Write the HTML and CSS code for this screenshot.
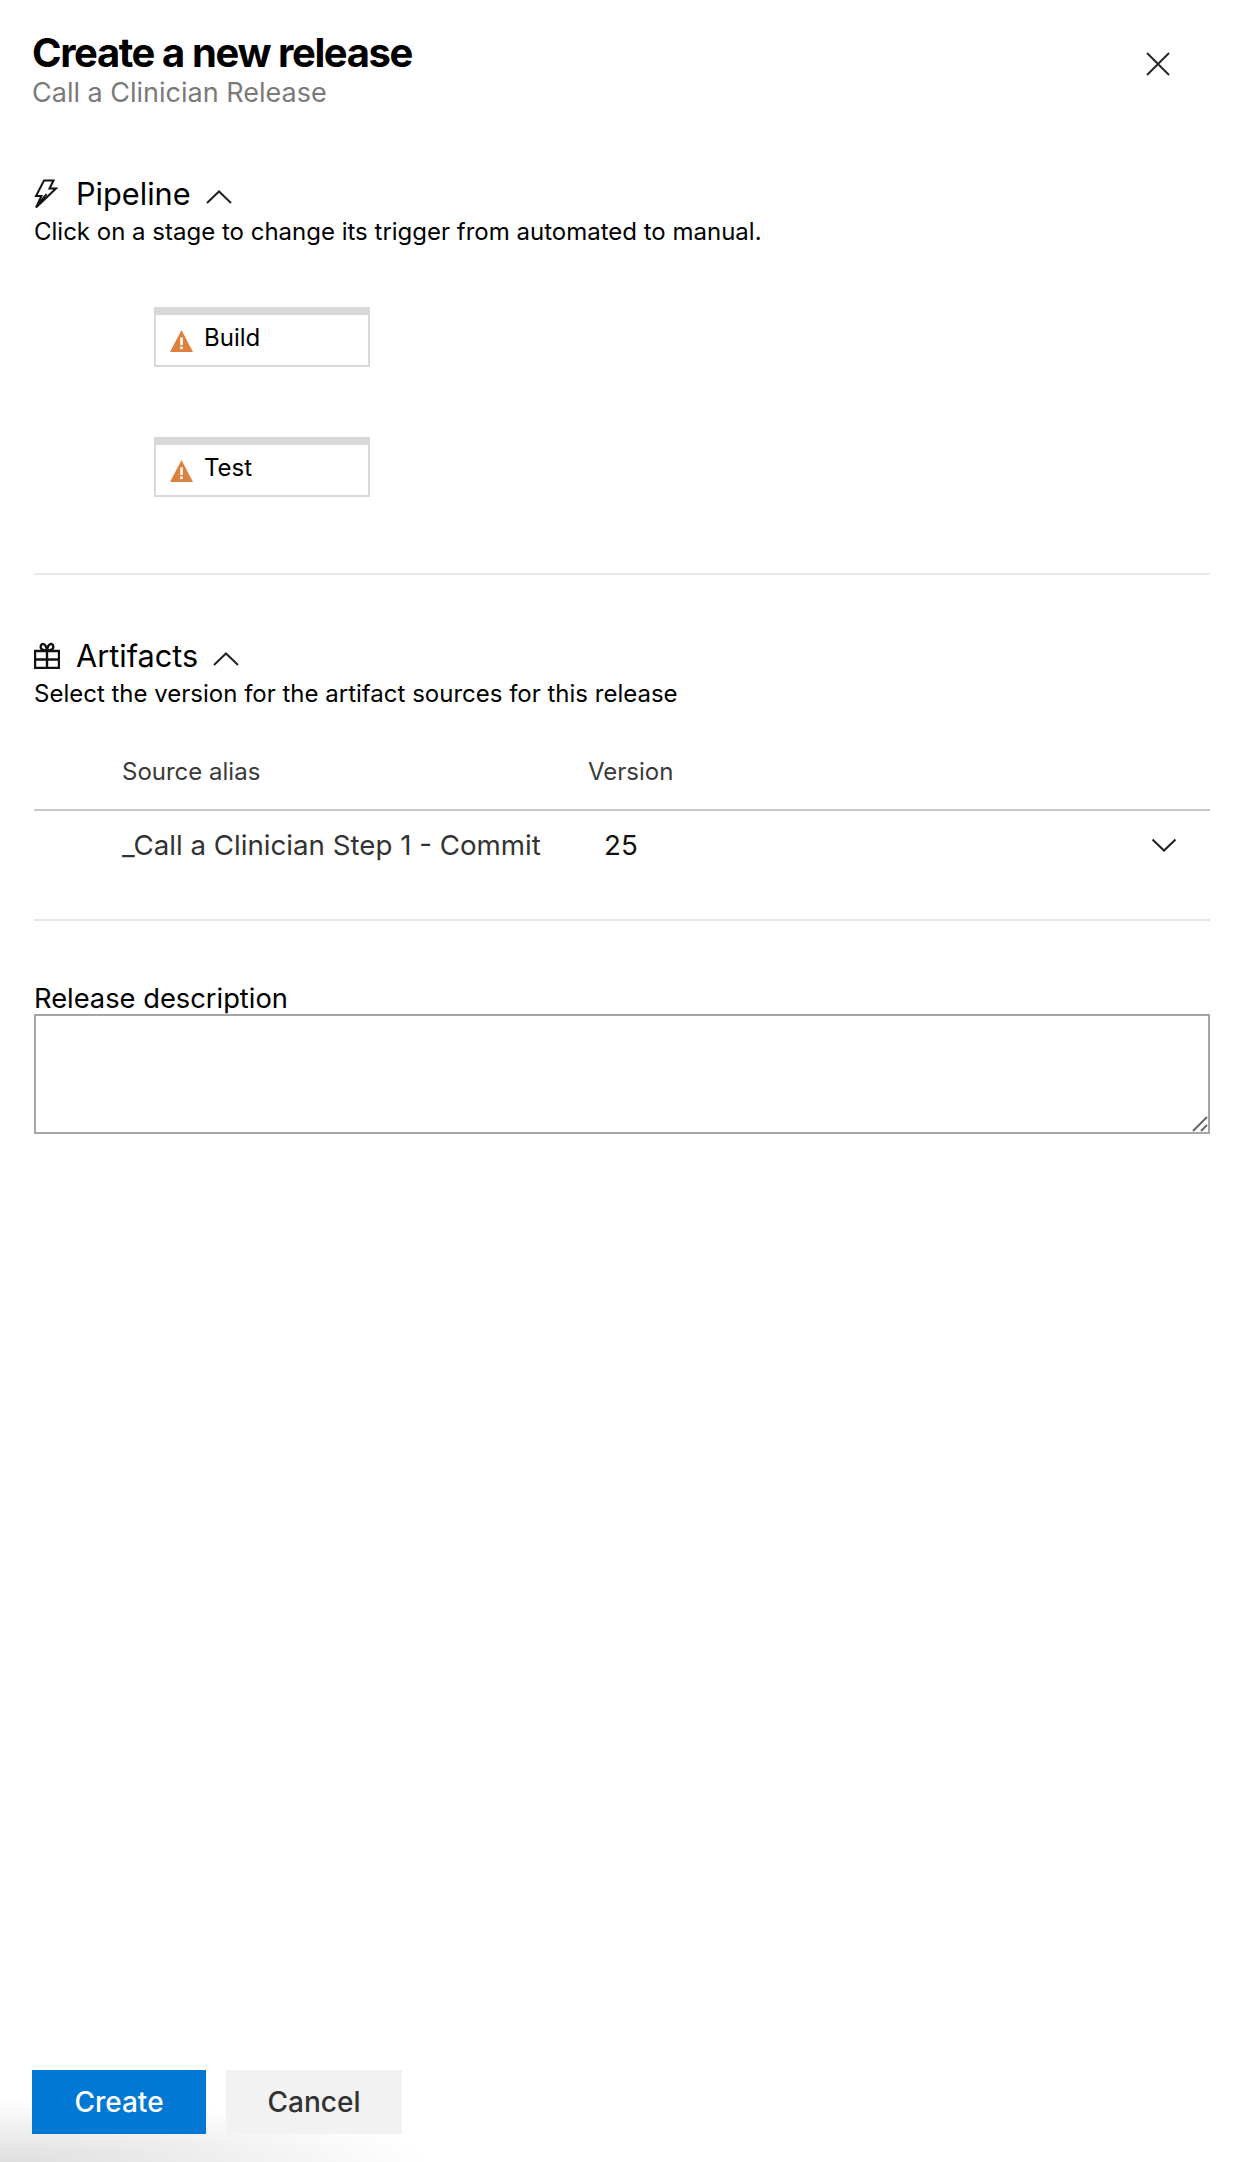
FILE: index.html
```html
<!DOCTYPE html>
<html lang="en">
<head>
    <meta charset="UTF-8">
    <title>Create a new release</title>
    <link rel="stylesheet" href="styles.css">
</head>
<body>
    <div class="panel">
        <header class="panel-header">
            <div>
                <h1>Create a new release</h1>
                <p class="subtitle">Call a Clinician Release</p>
            </div>
            <button class="close-btn" aria-label="Close">
                <svg width="24" height="24" viewBox="0 0 24 24"><path d="M1 1 23 23M23 1 1 23"/></svg>
            </button>
        </header>

        <section class="section pipeline">
            <h2 class="section-title">
                <svg class="section-icon bolt" width="24" height="30" viewBox="0 0 24 30"><path d="M10 1.500H19.500L15.500 9.500H22L2 28.500 7.500 17H2ZM2 28.500 12.500 15"/></svg>
                <span>Pipeline</span>
                <svg class="chevron" width="26" height="14" viewBox="0 0 26 14"><path d="M1 13 13 1.500 25 13"/></svg>
            </h2>
            <p class="section-desc">Click on a stage to change its trigger from automated to manual.</p>
            <div class="stages">
                <div class="stage">
                    <svg class="warn" width="23" height="22" viewBox="0 0 23 22"><path d="M11.500 0 23 22H0Z" fill="#dc8140"/><rect x="10.200" y="7.500" width="2.600" height="7.500" fill="#fff"/><rect x="10.200" y="16.500" width="2.600" height="2.600" fill="#fff"/></svg>
                    <span>Build</span>
                </div>
                <div class="stage">
                    <svg class="warn" width="23" height="22" viewBox="0 0 23 22"><path d="M11.500 0 23 22H0Z" fill="#dc8140"/><rect x="10.200" y="7.500" width="2.600" height="7.500" fill="#fff"/><rect x="10.200" y="16.500" width="2.600" height="2.600" fill="#fff"/></svg>
                    <span>Test</span>
                </div>
            </div>
        </section>

        <section class="section artifacts">
            <h2 class="section-title">
                <svg class="section-icon gift" width="26" height="27" viewBox="0 0 26 27"><path d="M1 9H25V26H1ZM1 17.500H25M13 9V26M13 8.500C8 8.500 6 6.500 7 3.500 8 .500 12 1.500 13 8.500 14 1.500 18 .500 19 3.500 20 6.500 18 8.500 13 8.500Z"/></svg>
                <span>Artifacts</span>
                <svg class="chevron" width="26" height="14" viewBox="0 0 26 14"><path d="M1 13 13 1.500 25 13"/></svg>
            </h2>
            <p class="section-desc">Select the version for the artifact sources for this release</p>
            <div class="artifact-head">
                <span class="col-alias">Source alias</span>
                <span>Version</span>
            </div>
            <div class="artifact-row">
                <span class="col-alias">_Call a Clinician Step 1 - Commit</span>
                <span class="version">25</span>
                <svg class="row-chevron" width="26" height="14" viewBox="0 0 26 14"><path d="M1.500 1.500 13 12.500 24.500 1.500"/></svg>
            </div>
        </section>

        <section class="description">
            <label for="desc">Release description</label>
            <div class="textarea-wrap">
                <textarea id="desc"></textarea>
                <svg class="grip" width="16" height="16" viewBox="0 0 16 16"><path d="M1 15 15 1M9 15 15 9"/></svg>
            </div>
        </section>

        <footer class="panel-footer">
            <button class="btn btn-primary">Create</button>
            <button class="btn">Cancel</button>
        </footer>
    </div>
</body>
</html>
```

FILE: styles.css
```css
* {
    box-sizing: border-box;
}
html, body {
    margin: 0;
    height: 100%;
}
body {
    font-family: Inter, "Liberation Sans", sans-serif;
    color: #000;
    background: #fff;
}
.panel {
    display: flex;
    flex-direction: column;
    height: 2162px;
    padding: 0 32px;
}
.panel-header {
    display: flex;
    justify-content: space-between;
    padding-top: 30px;
}
h1 {
    margin: 0;
    font-size: 40px;
    line-height: 46px;
    font-weight: 700;
    letter-spacing: -1.400px;
}
.subtitle {
    margin: 0;
    font-size: 27px;
    line-height: 34px;
    color: #7a7a7a;
}
.close-btn {
    width: 24px;
    height: 24px;
    margin: 22px 40px 0 0;
    padding: 0;
    border: none;
    background: none;
}
.close-btn path {
    fill: none;
    stroke: #262626;
    stroke-width: 2;
}
.section {
    margin-left: 2px;
}
.pipeline {
    margin-top: 61px;
    border-bottom: 2px solid #e8e8e8;
    padding-bottom: 76px;
}
.section-title {
    display: flex;
    align-items: center;
    margin: 0;
    height: 45px;
    font-size: 30.700px;
    font-weight: 400;
}
.section-icon {
    fill: none;
    stroke: #111;
}
.bolt {
    margin-right: 18px;
    stroke-width: 2;
}
.gift {
    margin-right: 16px;
    stroke-width: 2.400;
}
.chevron {
    margin: 6px 0 0 15px;
    fill: none;
    stroke: #222;
    stroke-width: 2;
}
.section-desc {
    margin: 0;
    font-size: 24px;
    line-height: 32px;
}
.stages {
    display: flex;
    flex-direction: column;
    gap: 70px;
    margin: 59px 0 0 120px;
}
.stage {
    display: flex;
    align-items: center;
    width: 216px;
    height: 60px;
    padding: 0 0 0 14px;
    border: 2px solid #d8d8d8;
    border-top-width: 8px;
    font-size: 24px;
}
.warn {
    margin: 2px 11px 0 0;
}
.stage span {
    margin-top: -6px;
}
.artifacts {
    margin-top: 58px;
    margin-left: 2px;
    border-bottom: 2px solid #e8e8e8;
    padding-bottom: 39px;
}
.artifact-head {
    display: flex;
    align-items: center;
    height: 64px;
    margin-top: 37px;
    padding: 0 0 14px 88px;
    border-bottom: 2px solid #c8c8c8;
    font-size: 24px;
    color: #3a3a3a;
}
.col-alias {
    width: 466px;
    flex: none;
}
.artifact-row {
    display: flex;
    align-items: center;
    height: 68px;
    padding-left: 88px;
    font-size: 27.700px;
    color: #333;
}
.version {
    margin-left: 16px;
    color: #111;
}
.row-chevron {
    margin-left: auto;
    margin-right: 33px;
    fill: none;
    stroke: #222;
    stroke-width: 2;
}
.artifacts {
    padding-bottom: 40px;
}
.description {
    margin: 63px 0 0 2px;
}
.description label {
    display: block;
    font-size: 27.300px;
    line-height: 30px;
}
.textarea-wrap {
    position: relative;
    height: 120px;
}
textarea {
    display: block;
    width: 100%;
    height: 100%;
    border: 2px solid #a6a6a6;
    border-radius: 0;
    resize: none;
    outline: none;
}
.grip {
    position: absolute;
    right: 2px;
    bottom: 2px;
    fill: none;
    stroke: #666;
    stroke-width: 2;
}
.panel-footer {
    display: flex;
    gap: 20px;
    margin: auto -32px 0;
    padding: 40px 32px 28px;
    background: radial-gradient(ellipse 430px 62px at 0 100%, #dedede, rgba(222,222,222,0) 100%);
}
.btn {
    width: 176px;
    height: 64px;
    padding: 0;
    border: none;
    font-family: inherit;
    font-size: 28px;
    font-weight: 500;
    color: #333;
    background: #f2f2f2;
}
.btn-primary {
    width: 174px;
    color: #fff;
    background: #0078d4;
}
```
